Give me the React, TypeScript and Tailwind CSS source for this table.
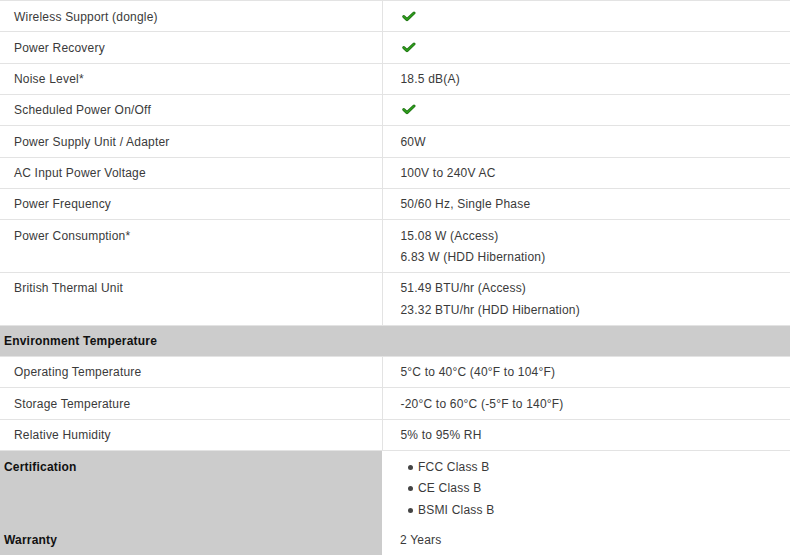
import React from 'react'

type Row = { label: string; values?: string[]; check?: boolean }

const powerRows: Row[] = [
  { label: 'Wireless Support (dongle)', check: true },
  { label: 'Power Recovery', check: true },
  { label: 'Noise Level*', values: ['18.5 dB(A)'] },
  { label: 'Scheduled Power On/Off', check: true },
  { label: 'Power Supply Unit / Adapter', values: ['60W'] },
  { label: 'AC Input Power Voltage', values: ['100V to 240V AC'] },
  { label: 'Power Frequency', values: ['50/60 Hz, Single Phase'] },
  { label: 'Power Consumption*', values: ['15.08 W (Access)', '6.83 W (HDD Hibernation)'] },
  { label: 'British Thermal Unit', values: ['51.49 BTU/hr (Access)', '23.32 BTU/hr (HDD Hibernation)'] },
]

const envRows: Row[] = [
  { label: 'Operating Temperature', values: ['5°C to 40°C (40°F to 104°F)'] },
  { label: 'Storage Temperature', values: ['-20°C to 60°C (-5°F to 140°F)'] },
  { label: 'Relative Humidity', values: ['5% to 95% RH'] },
]

function Check() {
  return (
    <svg width="14" height="11" viewBox="0 0 14 11" className="mt-[4px] ml-[1px]">
      <path d="M1.8 5.6 L5 8.6 L12 2" fill="none" stroke="#1c6e10" strokeWidth="3" strokeLinecap="round" strokeLinejoin="round" />
      <path d="M1.8 5.6 L5 8.6 L12 2" fill="none" stroke="#2e9c1c" strokeWidth="1.6" strokeLinecap="round" strokeLinejoin="round" />
    </svg>
  )
}

function SpecRow({ row }: { row: Row }) {
  return (
    <tr className="border-b border-[#e3e3e3] align-top">
      <td className="border-r border-[#e3e3e3] pl-[14px] pt-[5.5px] pb-[3.5px]">{row.label}</td>
      <td className="pl-[18px] pt-[5.5px] pb-[3.5px]">
        {row.check ? <Check /> : row.values?.map(v => <div key={v}>{v}</div>)}
      </td>
    </tr>
  )
}

export default function App() {
  return (
    <div className="w-[790px] h-[556px] overflow-hidden bg-white text-[12px] leading-[21.33px] tracking-[0.2px] text-[#3a3a3a]" style={{ fontFamily: '"Liberation Sans", Arial, sans-serif' }}>
      <table className="w-full table-fixed border-collapse border-t border-[#e3e3e3]">
        <colgroup>
          <col className="w-[382px]" />
          <col />
        </colgroup>
        <tbody>
          {powerRows.map(r => <SpecRow key={r.label} row={r} />)}
          <tr className="border-b border-[#e3e3e3] bg-[#cccccc]">
            <td colSpan={2} className="pl-[4px] pt-[5.5px] pb-[3.5px] font-bold text-[#111]">Environment Temperature</td>
          </tr>
          {envRows.map(r => <SpecRow key={r.label} row={r} />)}
          <tr className="align-top">
            <td className="bg-[#cccccc] pl-[4px] pt-[6px] pb-[4px] font-bold text-[#111]">Certification</td>
            <td className="pl-[18px] pt-[6px] pb-[4px]">
              <ul>
                {['FCC Class B', 'CE Class B', 'BSMI Class B'].map(c => (
                  <li key={c} className="flex items-center pl-[8px]">
                    <span className="w-[5px] h-[5px] rounded-full bg-[#444] mr-[5px]" />
                    {c}
                  </li>
                ))}
              </ul>
            </td>
          </tr>
          <tr className="align-top">
            <td className="bg-[#cccccc] pl-[4px] pt-[5.5px] pb-[3.5px] font-bold text-[#111]">Warranty</td>
            <td className="pl-[18px] pt-[5.5px] pb-[3.5px]">2 Years</td>
          </tr>
        </tbody>
      </table>
    </div>
  )
}
